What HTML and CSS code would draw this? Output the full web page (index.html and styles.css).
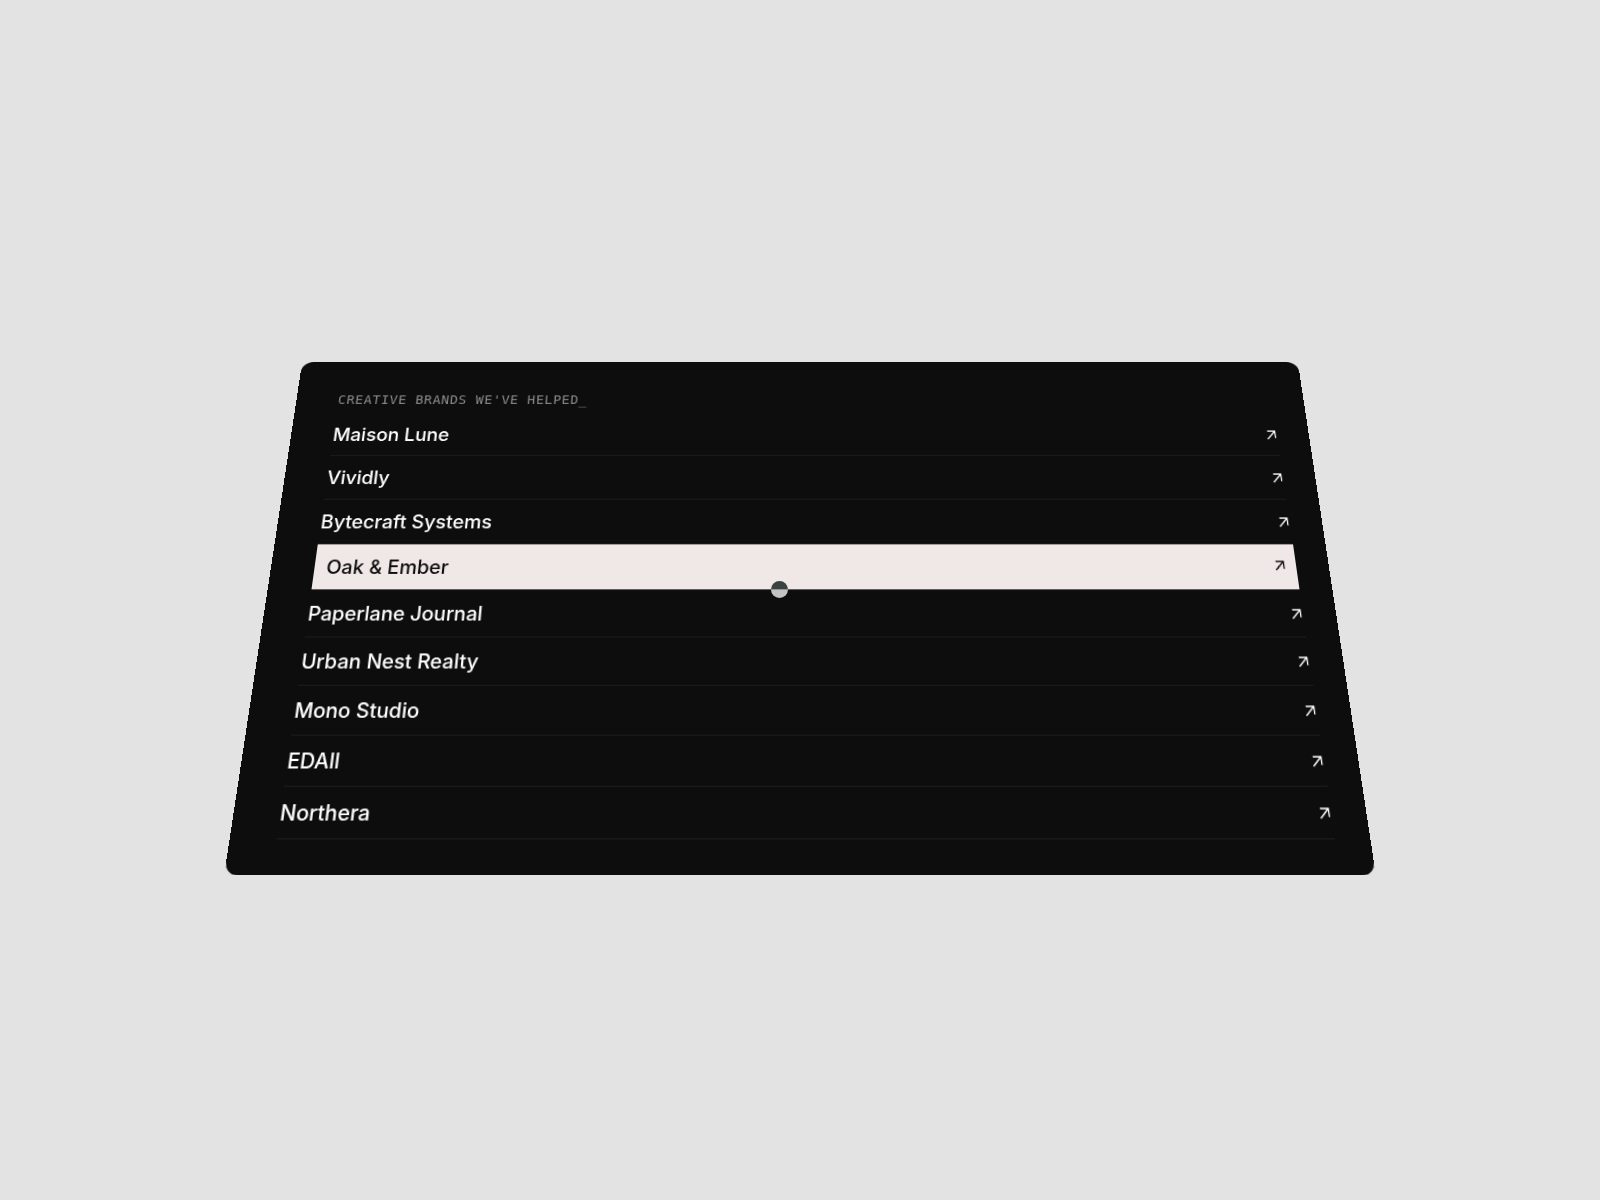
FILE: index.html
```
<!DOCTYPE html>
<html lang="en">
<head>
    <meta charset="UTF-8">
    <meta name="viewport" content="width=device-width, initial-scale=1.0">
    <title>Creative brands we've helped</title>
    <link rel="stylesheet" href="styles.css">
</head>
<body>
    <!-- Shared arrow icon -->
    <svg class="sprite" aria-hidden="true">
        <symbol id="arrow" viewBox="0 0 12 12">
            <path d="M1.4 11 L9.6 2 M1.8 2 H9.6 V9.8" />
        </symbol>
    </svg>

    <main class="stage">
        <section class="card">
            <h1 class="label">CREATIVE BRANDS WE'VE HELPED_</h1>
            <nav class="brands">
                <a class="brand" href="#">Maison Lune <svg class="arrow"><use href="#arrow" /></svg></a>
                <a class="brand" href="#">Vividly <svg class="arrow"><use href="#arrow" /></svg></a>
                <a class="brand" href="#">Bytecraft Systems <svg class="arrow"><use href="#arrow" /></svg></a>
                <a class="brand active" href="#">Oak &amp; Ember <svg class="arrow"><use href="#arrow" /></svg></a>
                <a class="brand" href="#">Paperlane Journal <svg class="arrow"><use href="#arrow" /></svg></a>
                <a class="brand" href="#">Urban Nest Realty <svg class="arrow"><use href="#arrow" /></svg></a>
                <a class="brand" href="#">Mono Studio <svg class="arrow"><use href="#arrow" /></svg></a>
                <a class="brand" href="#">EDAll <svg class="arrow"><use href="#arrow" /></svg></a>
                <a class="brand" href="#">Northera <svg class="arrow"><use href="#arrow" /></svg></a>
            </nav>
        </section>
        <div class="cursor"></div>
    </main>
</body>
</html>
```

FILE: styles.css
```
* { box-sizing: border-box; }
body {
    margin: 0;
    background: #e3e3e3;
    font-family: Inter, "Liberation Sans", sans-serif;
}
.sprite {
    position: absolute;
    width: 0;
    height: 0;
}
.stage {
    position: relative;
    display: flex;
    justify-content: center;
    align-items: center;
    min-height: 100vh;
    padding: 0 32px;
    perspective: 810px;
    overflow: hidden;
}
.card {
    width: 100%;
    max-width: 1068px;
    padding: 32px 33px 32px 44px;
    border-radius: 12px;
    background: #0d0d0d;
    transform: rotateX(13deg);
}
.label {
    margin: 0 0 4px;
    color: #8a8a8a;
    font-family: "DejaVu Sans Mono", monospace;
    font-size: 14px;
    font-weight: 400;
    line-height: 24px;
    letter-spacing: 0.05em;
}
.brands {
    display: flex;
    flex-direction: column;
}
.brand {
    display: flex;
    justify-content: space-between;
    align-items: center;
    height: 48px;
    border-bottom: 1px solid #1d1d1d;
    color: #fff;
    font-size: 20px;
    font-weight: 500;
    line-height: 24px;
    text-decoration: none;
}
.arrow {
    width: 12px;
    height: 12px;
    fill: none;
    stroke: currentColor;
    stroke-width: 1.3;
}
.brand:hover,
.brand.active {
    padding: 0 12px;
    background: #f0e7e7;
    color: #0d0d0d;
}
.brand:hover .arrow,
.brand.active .arrow { transform: translate(2px, -2px); }
/* Round pointer that inverts whatever is under it */
.cursor {
    position: absolute;
    top: 590px;
    left: 780px;
    width: 17px;
    height: 17px;
    margin: -9px 0 0 -9px;
    border-radius: 50%;
    background: #fff;
    opacity: 0.8;
    mix-blend-mode: difference;
    pointer-events: none;
}
```
